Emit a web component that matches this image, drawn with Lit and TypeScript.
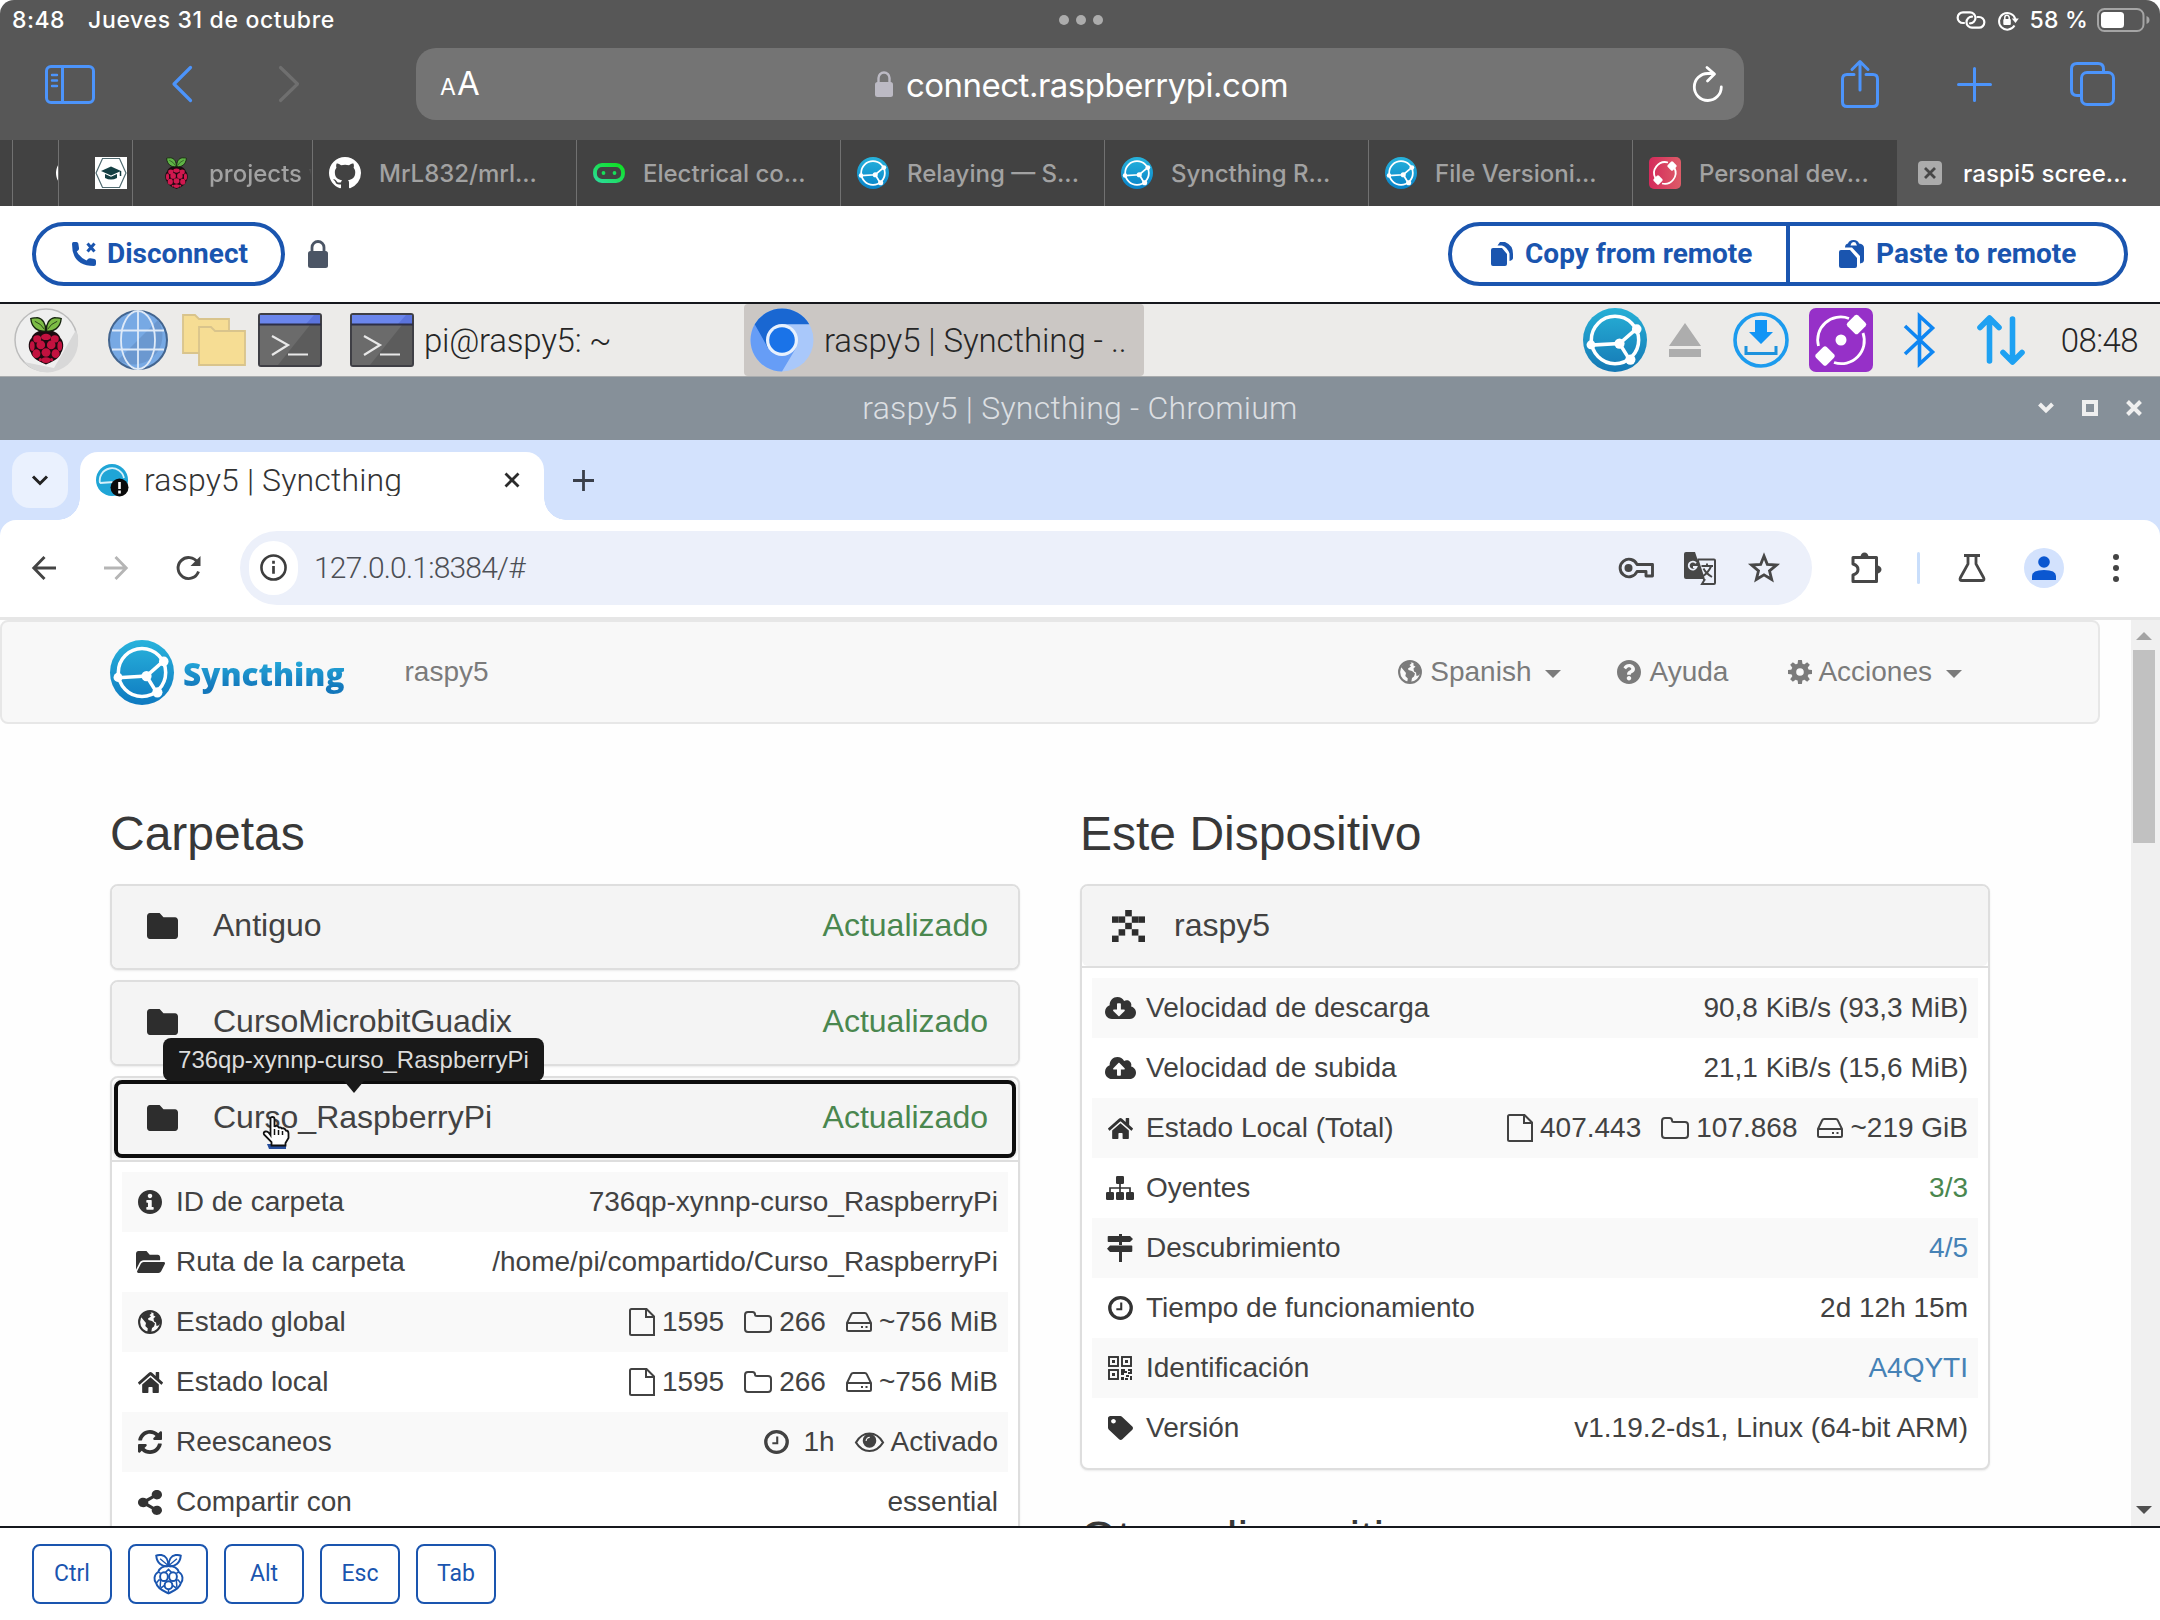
import { LitElement, html, svg, css, nothing, TemplateResult } from "lit";
import { customElement } from "lit/decorators.js";

type Body = TemplateResult | TemplateResult[] | unknown;

const ic = (vb: string, w: number, h: number, body: Body, cls = "") =>
  html`<svg class="ic ${cls}" viewBox=${vb} width=${w} height=${h} preserveAspectRatio="none">${body}</svg>`;

const P = {
  folder: "M464 128H272l-64-64H48C21.49 64 0 85.49 0 112v288c0 26.51 21.49 48 48 48h416c26.51 0 48-21.49 48-48V176c0-26.51-21.49-48-48-48z",
  info: "M256 8C119.043 8 8 119.083 8 256c0 136.997 111.043 248 248 248s248-111.003 248-248C504 119.083 392.957 8 256 8zm0 80c26 0 46 18.804 46 44s-20 44-46 44-46-18.804-46-44 20-44 46-44zm76 314c0 6.627-5.373 12-12 12h-128c-6.627 0-12-5.373-12-12v-30c0-6.627 5.373-12 12-12h22v-90h-22c-6.627 0-12-5.373-12-12v-30c0-6.627 5.373-12 12-12h88c6.627 0 12 5.373 12 12v132h28c6.627 0 12 5.373 12 12v30z",
  folderOpen: "M572.694 292.093L500.27 416.248A63.997 63.997 0 0 1 444.989 448H45.025c-18.523 0-30.064-20.093-20.731-36.093l72.424-124.155A64 64 0 0 1 152 256h399.964c18.523 0 30.064 20.093 20.73 36.093zM152 224h328v-48c0-26.51-21.49-48-48-48H272l-64-64H48C21.49 64 0 85.49 0 112v278.046l69.077-118.418C86.214 242.25 117.989 224 152 224z",
  home: "M280.37 148.26L96 300.11V464a16 16 0 0 0 16 16l112.06-.29a16 16 0 0 0 15.92-16V368a16 16 0 0 1 16-16h64a16 16 0 0 1 16 16v95.64a16 16 0 0 0 16 16.05L464 480a16 16 0 0 0 16-16V300L295.67 148.26a12.19 12.19 0 0 0-15.3 0zM571.6 251.47L488 182.56V44.05a12 12 0 0 0-12-12h-56a12 12 0 0 0-12 12v72.61L318.47 43a48 48 0 0 0-61 0L4.34 251.47a12 12 0 0 0-1.6 16.9l25.5 31A12 12 0 0 0 45.15 301l235.22-193.74a12.19 12.19 0 0 1 15.3 0L530.9 301a12 12 0 0 0 16.9-1.6l25.5-31a12 12 0 0 0-1.7-16.93z",
  share: "M352 320c-22.608 0-43.387 7.819-59.79 20.895l-102.486-64.054a96.551 96.551 0 0 0 0-41.683l102.486-64.054C308.613 184.181 329.392 192 352 192c53.019 0 96-42.981 96-96S405.019 0 352 0s-96 42.981-96 96c0 7.158.79 14.13 2.276 20.841L155.79 180.895C139.387 167.819 118.608 160 96 160c-53.019 0-96 42.981-96 96s42.981 96 96 96c22.608 0 43.387-7.819 59.79-20.895l102.486 64.054A96.301 96.301 0 0 0 256 416c0 53.019 42.981 96 96 96s96-42.981 96-96-42.981-96-96-96z",
  sync: "M370.72 133.28C339.458 104.008 298.888 87.962 255.848 88c-77.458.068-144.328 53.178-162.791 126.85-1.344 5.363-6.122 9.15-11.651 9.15H24.103c-7.498 0-13.194-6.807-11.807-14.176C33.933 94.924 134.813 8 256 8c66.448 0 126.791 26.136 171.315 68.685L463.03 40.97C478.149 25.851 504 36.559 504 57.941V192c0 13.255-10.745 24-24 24H345.941c-21.382 0-32.09-25.851-16.971-40.971l41.75-41.749zM32 296h134.059c21.382 0 32.09 25.851 16.971 40.971l-41.75 41.75c31.262 29.273 71.835 45.319 114.876 45.28 77.418-.07 144.315-53.144 162.787-126.849 1.344-5.363 6.122-9.15 11.651-9.15h57.304c7.498 0 13.194 6.807 11.807 14.176C478.067 417.076 377.187 504 256 504c-66.448 0-126.791-26.136-171.315-68.685L48.97 471.03C33.851 486.149 8 475.441 8 454.059V320c0-13.255 10.745-24 24-24z",
  cloud: "M537.6 226.6c4.1-10.7 6.4-22.4 6.4-34.6 0-53-43-96-96-96-19.7 0-38.1 6-53.3 16.2C367 64.2 315.3 32 256 32c-88.4 0-160 71.6-160 160 0 2.7.1 5.4.2 8.1C40.2 219.8 0 273.2 0 336c0 79.5 64.5 144 144 144h368c70.7 0 128-57.3 128-128 0-61.9-44-113.6-102.4-125.4z",
  cloudDown: "M404.7 315.3L299.3 420.7c-6.2 6.2-16.4 6.2-22.6 0L171.3 315.3c-10.1-10.1-2.9-27.3 11.3-27.3H248V176c0-8.8 7.2-16 16-16h48c8.8 0 16 7.2 16 16v112h65.4c14.2 0 21.4 17.2 11.3 27.3z",
  cloudUp: "M393.4 288H328v112c0 8.8-7.2 16-16 16h-48c-8.8 0-16-7.2-16-16V288h-65.4c-14.3 0-21.4-17.2-11.3-27.3l105.4-105.4c6.2-6.2 16.4-6.2 22.6 0l105.4 105.4c10.1 10.1 2.9 27.3-11.3 27.3z",
  tag: "M0 252.118V48C0 21.49 21.49 0 48 0h204.118a48 48 0 0 1 33.941 14.059l211.882 211.882c18.745 18.745 18.745 49.137 0 67.882L293.823 497.941c-18.745 18.745-49.137 18.745-67.882 0L14.059 286.059A48 48 0 0 1 0 252.118zM112 64c-26.51 0-48 21.49-48 48s21.49 48 48 48 48-21.49 48-48-21.49-48-48-48z",
  question: "M504 256c0 136.997-111.043 248-248 248S8 392.997 8 256C8 119.083 119.043 8 256 8s248 111.083 248 248zM262.655 90c-54.497 0-89.255 22.957-116.549 63.758-3.536 5.286-2.353 12.415 2.715 16.258l34.699 26.31c5.205 3.947 12.621 3.008 16.665-2.122 17.864-22.658 30.113-35.797 57.303-35.797 20.429 0 45.698 13.148 45.698 32.958 0 14.976-12.363 22.667-32.534 33.976C247.128 238.528 216 254.941 216 296v4c0 6.627 5.373 12 12 12h56c6.627 0 12-5.373 12-12v-1.333c0-28.462 83.186-29.647 83.186-106.667 0-58.002-60.165-102-116.531-102zM256 338c-25.365 0-46 20.635-46 46 0 25.364 20.635 46 46 46s46-20.636 46-46c0-25.365-20.635-46-46-46z",
  github: "M8 0C3.58 0 0 3.58 0 8c0 3.54 2.29 6.53 5.47 7.59.4.07.55-.17.55-.38 0-.19-.01-.82-.01-1.49-2.01.37-2.53-.49-2.69-.94-.09-.23-.48-.94-.82-1.13-.28-.15-.68-.52-.01-.53.63-.01 1.08.58 1.23.82.72 1.21 1.87.87 2.33.66.07-.52.28-.87.51-1.07-1.78-.2-3.64-.89-3.64-3.95 0-.87.31-1.59.82-2.15-.08-.2-.36-1.02.08-2.12 0 0 .67-.21 2.2.82.64-.18 1.32-.27 2-.27s1.36.09 2 .27c1.53-1.04 2.2-.82 2.2-.82.44 1.1.16 1.92.08 2.12.51.56.82 1.27.82 2.15 0 3.07-1.87 3.75-3.65 3.95.29.25.54.73.54 1.48 0 1.07-.01 1.93-.01 2.2 0 .21.15.46.55.38A8.01 8.01 0 0 0 16 8c0-4.42-3.58-8-8-8z",
};

/* ---------- table and navbar glyphs ---------- */
const solid = (d: string, vb: string, w: number, h: number) => ic(vb, w, h, svg`<path fill="currentColor" fill-rule="evenodd" d=${d}/>`);
const line = (w: number, h: number, vb: string, body: Body) => ic(vb, w, h, svg`<g fill="none" stroke="currentColor">${body}</g>`);

const G: Record<string, () => TemplateResult> = {
  info: () => solid(P.info, "8 8 496 496", 24, 24),
  folderOpen: () => solid(P.folderOpen, "0 64 576 384", 29, 22),
  home: () => solid(P.home, "0 32 576 448", 25, 21),
  sync: () => solid(P.sync, "8 8 496 496", 24, 24),
  share: () => solid(P.share, "0 0 448 512", 24, 25),
  down: () => solid(P.cloud + P.cloudDown, "0 32 640 448", 31, 22),
  up: () => solid(P.cloud + P.cloudUp, "0 32 640 448", 31, 22),
  tag: () => solid(P.tag, "0 0 512 512", 25, 24),
  question: () => solid(P.question, "8 8 496 496", 24, 24),
  globe: () => ic("0 0 24 24", 24, 24, svg`
    <circle cx="12" cy="12" r="10.9" fill="none" stroke="currentColor" stroke-width="2.1"/>
    <path fill="currentColor" d="M3 7 6.500 2.800 12 1l1.500 2.500-2 1.500 1.500 1.500-3 2 .5 1.500 3.500 1 3 2.500-1 3-2 1.500-.8 4.500h-4l.6-4-2.500-2.500.7-3L5.500 10zM15.500 2l4 2.500 2.500 4 .8 4-2.300 3-2 .5-.5-3.500-2-1-.5-3 2-2-2-1z"/>`),
  clock: () => line(25, 24, "0 0 24 24", svg`<circle cx="12" cy="12" r="10.300" stroke-width="3.200"/><path d="M12.700 6.500v6.700H8" stroke-width="2"/>`),
  sitemap: () => ic("0 0 28 24", 28, 24, svg`
    <g fill="currentColor"><rect x="10" y="0" width="8" height="8" rx="1.300"/><rect x="0" y="16" width="8" height="8" rx="1.300"/><rect x="10" y="16" width="8" height="8" rx="1.300"/><rect x="20" y="16" width="8" height="8" rx="1.300"/></g>
    <path d="M4 16v-4h20v4M14 8v8" fill="none" stroke="currentColor" stroke-width="1.700"/>`),
  signs: () => ic("0 0 26 28", 26, 28, svg`<g fill="currentColor"><path d="M12 0h3v2h-3zM12 8h3v3h-3zM12 18h3v10h-3z"/><path d="M1.500 2h21.500l3 3-3 3H1.500a.8.800 0 0 1-.8-.8V2.800a.8.800 0 0 1 .8-.8zM24.500 11.500H3l-3 3.200 3 3.200h21.500a.8.800 0 0 0 .8-.8v-4.800a.8.800 0 0 0-.8-.8z"/></g>`),
  qr: () => ic("0 0 24 24", 24, 24, svg`<g fill="none" stroke="currentColor" stroke-width="1.900"><rect x="1" y="1" width="9" height="9"/><rect x="14" y="1" width="9" height="9"/><rect x="1" y="14" width="9" height="9"/></g>
    <path fill="currentColor" d="M4 4h3v3H4zM17 4h3v3h-3zM4 17h3v3H4zM13 13h4v2h2v2h-3v2h-3zM20 13h4v5h-4v-2h2v-1h-2zM13 21h3v3h-3zM18 19h3v2h-3zM17 22h3v2h-3zM22 20h2v4h-2z"/>`),
  file: () => line(26, 28, "0 0 26 28", svg`<path d="M1 2.500Q1 1 2.500 1H17.500L25 8.500V27H2.500Q1 27 1 25.500zM17 1V9H25" stroke-width="2"/>`),
  folderO: () => line(28, 22, "0 0 28 22", svg`<path d="M1 4Q1 1 4 1H8.500Q11 1 11 3.500Q11 5 13 5H24Q27 5 27 8V18Q27 21 24 21H4Q1 21 1 18z" stroke-width="2"/>`),
  hdd: () => line(26, 20, "0 0 26 20", svg`<path d="M1 11 5.200 2.300Q5.800 1 7.200 1H18.800Q20.200 1 20.800 2.300L25 11V17.500Q25 19 23.500 19H2.500Q1 19 1 17.500zM1 11H25M15 15h2M19.500 15h2" stroke-width="2"/>`),
  eye: () => ic("0 0 30 20", 29, 20, svg`<path d="M1 10.500C4.500 4.500 9.500 1.500 15 1.500s10.500 3 14 9c-3.500 5.500-8.500 8.500-14 8.500S4.500 16 1 10.500z" fill="none" stroke="currentColor" stroke-width="2.200"/><circle cx="15" cy="8.800" r="7" fill="currentColor"/><path d="M11.500 9a3.700 3.700 0 0 1 3.700-3.700" fill="none" stroke="#f9f9f9" stroke-width="1.200"/>`),
  gear: () => ic("-12 -12 24 24", 24, 24, svg`${[0, 45, 90, 135, 180, 225, 270, 315].map((a) => svg`<path transform="rotate(${a})" d="M-2.600-7 L-1.900-12H1.900L2.600-7z" fill="currentColor"/>`)}<circle r="6.300" fill="none" stroke="currentColor" stroke-width="5"/>`),
};

/* ---------- logos ---------- */
let seq = 0;
const syncthing = (s: number, from = "#27b3dc", to = "#0882c8", h = s) => {
  const id = `sg${seq++}`;
  return ic("0 0 100 100", s, h, svg`
    <defs><linearGradient id=${id} x1="0" y1="0" x2="0" y2="1"><stop offset="0" stop-color=${from}/><stop offset="1" stop-color=${to}/></linearGradient></defs>
    <circle cx="50" cy="50" r="50" fill="url(#${id})"/>
    <circle cx="50" cy="50" r="37" fill="none" stroke="#fff" stroke-width="5.500"/>
    <path d="M12 58 57 55.500 83 33M57 55.500 73 81" fill="none" stroke="#fff" stroke-width="5.500"/>
    <g fill="#fff"><circle cx="12.500" cy="57.500" r="7"/><circle cx="84" cy="33" r="7.500"/><circle cx="74" cy="80.500" r="8"/><circle cx="57" cy="55.500" r="8"/></g>`);
};

const drupes: [number, number, number, number][] = [
  [24, 25.5, 6.2, 4], [13, 28, 5, 4.5], [35, 28, 5, 4.5], [17.5, 35.5, 5.4, 5.4], [30.5, 35.5, 5.4, 5.4],
  [6.8, 37, 3, 6], [41.2, 37, 3, 6], [24, 45, 5.6, 5.2], [12, 46.5, 5, 5.5], [36, 46.5, 5, 5.5], [24, 54.5, 5.5, 3.6], [17, 54, 2, 2], [31, 54, 2, 2],
];
const BODY = "M24 17C32 17 40 20 42 27 46 30 47 40 43 45 41 53 31 57 24 60 17 57 7 53 5 45 1 40 2 30 6 27 8 20 16 17 24 17z";
const LEAF_L = "M23.500 18C14 19.500 6 14 5 2.500 8 1 11 2 13 1.500 20 2.500 24 9 23.500 18z";
const LEAF_R = "M24.500 18C34 19.500 42 14 43 2.500 40 1 37 2 35 1.500 28 2.500 24 9 24.500 18z";
const berry = (red: string, green: string) => svg`
  <path d=${BODY} fill="#1c0a10"/>
  <g fill=${green} stroke="#16240f" stroke-width="1.700"><path d=${LEAF_L}/><path d=${LEAF_R}/></g>
  <path d="M10 6Q18 9 22 16M38 6Q30 9 26 16" fill="none" stroke="#16240f" stroke-width="1"/>
  <g fill=${red}>${drupes.map(([x, y, a, b]) => svg`<ellipse cx=${x} cy=${y} rx=${a} ry=${b}/>`)}</g>`;

const raspberryLine = () => ic("0 0 48 60", 31, 40, svg`
  <g fill="none" stroke="currentColor" stroke-width="3"><path d=${LEAF_L}/><path d=${LEAF_R}/><path d="M11 7 23 17M37 7 25 17" stroke-width="2"/>
  <path d="M24 18C33 18 38 21 40 27 47 31 47 40 43 44 41 53 30 56 24 59 18 56 7 53 5 44 1 40 1 31 8 27 10 21 15 18 24 18z"/>
  <ellipse cx="17" cy="34" rx="6" ry="6.500"/><ellipse cx="31" cy="34" rx="6" ry="6.500"/><circle cx="24" cy="47" r="6"/>
  <path d="M8 27 12 29M40 27 36 29M5 44 9 39 13 39M43 44 39 39 35 39M18 47 12 51M30 47 36 51M24 53v5M12 38 11 50M36 38 37 50M19 28 24 23 29 28" stroke-width="2.300"/></g>`);

const terminal = () => ic("0 0 64 54", 64, 54, svg`
  <rect x="1" y="1" width="62" height="52" rx="2" fill="#5c5c5c" stroke="#3f3f45" stroke-width="2"/>
  <path d="M2 12H52L20 52H2z" fill="#6b6b6b"/><path d="M2 2H62V11H2z" fill="#5b74dd"/><path d="M2 2H56L48 11H2z" fill="#6b86ec"/><path d="M1 11.500H63" stroke="#2d2f47" stroke-width="2"/>
  <path d="M14 23 30 32 14 42M30 41.500H50" fill="none" stroke="#e8e8e8" stroke-width="2.200"/>`);

const purpleConnect = () => ic("0 0 64 64", 64, 64, svg`
  <rect width="64" height="64" rx="7" fill="#9630c8"/>
  <g fill="none" stroke="#fff" stroke-width="2.800"><path d="M40 10.500A23 23 0 0 0 9.500 38M54 25A23 23 0 0 1 25 54.500"/></g>
  <circle cx="32" cy="32" r="5.500" fill="#fff"/>
  <g fill="#fff"><rect x="-7.600" y="-7.600" width="15.200" height="15.200" rx="2.500" transform="translate(47.500 16.500) rotate(45)"/><rect x="-7.600" y="-7.600" width="15.200" height="15.200" rx="2.500" transform="translate(16 48) rotate(45)"/></g>`);

const redConnect = () => ic("0 0 64 64", 32, 32, svg`
  <defs><linearGradient id="rc" x1="0" x2="1" y1="0" y2="0"><stop offset="0" stop-color="#d42a5b"/><stop offset="1" stop-color="#dd5c68"/></linearGradient></defs>
  <rect width="64" height="64" rx="10" fill="url(#rc)"/>
  <g fill="none" stroke="#fff" stroke-width="3.600"><path d="M38 11A22 22 0 0 0 13 43M51 22A22 22 0 0 1 26 53"/></g>
  <g fill="#fff"><rect x="-7.500" y="-7.500" width="15" height="15" rx="3" transform="translate(46 18) rotate(45)"/><rect x="-7.500" y="-7.500" width="15" height="15" rx="3" transform="translate(18 46) rotate(45)"/></g>`);

/* ---------- data ---------- */
interface Stat { icon?: string; text: string }
interface Row { icon: string; label: string; value: Stat[]; tone?: string }

const FOLDER_ROWS: Row[] = [
  { icon: "info", label: "ID de carpeta", value: [{ text: "736qp-xynnp-curso_RaspberryPi" }] },
  { icon: "folderOpen", label: "Ruta de la carpeta", value: [{ text: "/home/pi/compartido/Curso_RaspberryPi" }] },
  { icon: "globe", label: "Estado global", value: [{ icon: "file", text: "1595" }, { icon: "folderO", text: "266" }, { icon: "hdd", text: "~756 MiB" }] },
  { icon: "home", label: "Estado local", value: [{ icon: "file", text: "1595" }, { icon: "folderO", text: "266" }, { icon: "hdd", text: "~756 MiB" }] },
  { icon: "sync", label: "Reescaneos", value: [{ icon: "clock", text: "\u00a01h" }, { icon: "eye", text: "Activado" }] },
  { icon: "share", label: "Compartir con", value: [{ text: "essential" }] },
];
const DEVICE_ROWS: Row[] = [
  { icon: "down", label: "Velocidad de descarga", value: [{ text: "90,8 KiB/s (93,3 MiB)" }] },
  { icon: "up", label: "Velocidad de subida", value: [{ text: "21,1 KiB/s (15,6 MiB)" }] },
  { icon: "home", label: "Estado Local (Total)", value: [{ icon: "file", text: "407.443" }, { icon: "folderO", text: "107.868" }, { icon: "hdd", text: "~219 GiB" }] },
  { icon: "sitemap", label: "Oyentes", value: [{ text: "3/3" }], tone: "ok" },
  { icon: "signs", label: "Descubrimiento", value: [{ text: "4/5" }], tone: "link" },
  { icon: "clock", label: "Tiempo de funcionamiento", value: [{ text: "2d 12h 15m" }] },
  { icon: "qr", label: "Identificación", value: [{ text: "A4QYTI" }], tone: "link" },
  { icon: "tag", label: "Versión", value: [{ text: "v1.19.2-ds1, Linux (64-bit ARM)" }] },
];
const KEYS = ["Ctrl", "", "Alt", "Esc", "Tab"];
const IDENTICON = ["..#..", "##.##", "..#..", ".#.#.", "#...#"];

@customElement("app-root")
export class AppRoot extends LitElement {
  static styles = css`
    :host { display: block; width: 2160px; height: 1620px; overflow: hidden; background: #fff; font-family: "Liberation Sans", Arial, sans-serif; }
    * { box-sizing: border-box; }
    .ic { display: block; flex: none; overflow: visible; }
    .grow { flex: 1; }

    .safari { background: #575757; height: 206px; border-radius: 14px 14px 0 0; font-family: Inter, "Liberation Sans", sans-serif; color: #fff; overflow: hidden; }
    .status { display: grid; grid-template-columns: 1fr auto 1fr; align-items: center; height: 40px; padding: 0 10px 0 12px; font-size: 23px; font-weight: 500; }
    .status-left { display: flex; gap: 23px; white-space: nowrap; }
    .time { letter-spacing: 0.5px; }
    .date { letter-spacing: 0.65px; }
    .status-right { display: flex; align-items: center; justify-content: flex-end; white-space: nowrap; }
    .pct { margin: 0 9px 0 11px; letter-spacing: 0.2px; }
    .rot { margin-left: 12px; }
    .bar { display: flex; align-items: center; height: 100px; padding: 0 42px 12px 45px; color: #4c94fb; }
    .back { margin-left: 77px; }
    .fwd { margin-left: 87px; color: #6f6f6f; }
    .field { display: grid; grid-template-columns: 1fr auto 1fr; align-items: center; flex: none; width: 1328px; height: 72px; margin-left: 117px; padding: 0 21px 0 24px; border-radius: 20px; background: #747474; color: #fff; }
    .aa { display: flex; align-items: baseline; font-size: 33px; line-height: 40px; gap: 1px; padding-top: 2px; }
    .aa-small { font-size: 23px; }
    .host { display: flex; align-items: center; gap: 13px; font-size: 33px; line-height: 40px; letter-spacing: -0.5px; }
    .hostname { padding-top: 1px; }
    .reload { justify-self: end; }
    .share { margin-left: 97px; }
    .plus { margin-left: 78px; }
    .tabs { margin-left: 78px; }
    .tabbar { display: flex; height: 66px; background: #424242; color: #a2a2a2; font-size: 24px; font-weight: 500; }
    .tab { display: flex; align-items: center; flex: none; width: 264px; padding-left: 15px; border-right: 1.5px solid #717171; overflow: hidden; white-space: nowrap; }
    .tab-ic { display: flex; justify-content: center; flex: none; width: 34px; margin-right: 17px; }
    .tab-sliver { width: 13px; padding-left: 0; }
    .tab-edge { width: 46px; padding-left: 43px; color: #fff; }
    .tab-icon { width: 74px; padding-left: 36px; }
    .tab-cut { width: 180px; padding-left: 30px; }
    .tab-cut .tab-ic { width: 26px; margin-right: 20px; }
    .tab-last { border-right: none; }
    .tab-active { background: #575757; color: #fff; border-right: none; padding-left: 21px; letter-spacing: 0.1px; }
    .tab-active .tab-ic { width: 24px; margin-right: 21px; }
    .cut { width: 103px; overflow: hidden; -webkit-mask-image: linear-gradient(90deg, #000 88%, transparent); mask-image: linear-gradient(90deg, #000 88%, transparent); }

    .connect { display: flex; align-items: center; height: 98px; padding: 0 32px; border-bottom: 2px solid #16181d; font-family: Roboto, sans-serif; font-size: 28px; font-weight: 700; color: #1a55af; background: #fff; white-space: nowrap; }
    .pill { display: flex; align-items: center; height: 64px; border: 4px solid #1a55af; border-radius: 32px; }
    .pill span { margin-top: -2px; }
    .disconnect { width: 253px; padding-left: 36px; }
    .disconnect span { margin-left: 11px; }
    .secure { margin-left: 23px; color: #4b5565; }
    .pair { width: 680px; }
    .half { display: flex; align-items: center; height: 100%; }
    .copy { width: 334px; padding-left: 39px; gap: 12px; }
    .paste { flex: 1; border-left: 4px solid #1a55af; padding-left: 49px; gap: 12px; }

    .taskbar { display: flex; align-items: center; height: 72px; padding: 0 22px 0 14px; background: #ecebe9; font-family: Roboto, sans-serif; font-weight: 300; font-size: 33px; color: #262626; white-space: nowrap; letter-spacing: -0.1px; }
    .gl { margin-left: 30px; }
    .fl { margin-left: 14px; }
    .tm { margin-left: 12px; }
    .tm2 { margin-left: 28px; }
    .pi { margin-left: 10px; width: 320px; letter-spacing: -0.25px; }
    .task { display: flex; align-items: center; width: 400px; height: 72px; padding-left: 6px; gap: 10px; background: #cbc7c4; border-radius: 4px; }
    .tray { display: flex; align-items: center; }
    .t-eject { margin-left: 22px; }
    .t-down { margin-left: 32px; }
    .t-purple { margin-left: 20px; }
    .t-bt { margin-left: 31px; }
    .t-net { margin-left: 43px; }
    .clock { margin-left: 36px; letter-spacing: -0.6px; }
    .titlebar { display: grid; grid-template-columns: 1fr auto 1fr; align-items: center; height: 64px; padding: 0 18px 1px; background: #869099; border-top: 1px solid #a9acae; font-family: Roboto, sans-serif; font-weight: 300; font-size: 32px; color: #dcdfe2; white-space: nowrap; letter-spacing: 0.24px; }
    .winbtns { display: flex; justify-content: flex-end; align-items: center; gap: 28px; }
    .strip { display: flex; height: 80px; padding: 12px 12px 0; background: #d3e2fd; font-family: Roboto, sans-serif; font-weight: 300; }
    .chev { display: flex; align-items: center; justify-content: center; width: 56px; height: 56px; border-radius: 18px; background: #eaf1fe; color: #222; }
    .ctab { position: relative; display: flex; width: 464px; height: 68px; margin-left: 12px; padding: 12px 24px 0 16px; background: #fff; border-radius: 18px 18px 0 0; font-size: 32px; color: #333; }
    .ctab::before, .ctab::after { content: ""; position: absolute; bottom: 0; width: 22px; height: 22px; }
    .ctab::before { left: -22px; background: radial-gradient(circle at 0 0, transparent 21.5px, #fff 22px); }
    .ctab::after { right: -22px; background: radial-gradient(circle at 100% 0, transparent 21.5px, #fff 22px); }
    .ctitle { margin-left: 16px; width: 264px; height: 32px; line-height: 33px; letter-spacing: 0.15px; overflow: hidden; white-space: nowrap; }
    .cclose { margin: 8px 0 0 auto; }
    .cplus { margin: 18px 0 0 29px; }
    .toolwrap { background: #d3e2fd; }
    .tool { display: flex; align-items: center; height: 100px; padding: 0 38px 2px 32px; background: #fff; border-radius: 16px 16px 0 0; border-bottom: 3px solid #e6e6e6; color: #444; }
    .t-fwd, .t-rel { margin-left: 48px; }
    .omni { display: flex; align-items: center; flex: none; width: 1572px; height: 74px; margin-left: 39px; padding: 0 33px 0 9px; border-radius: 37px; background: #ecf0fa; font-family: Roboto, sans-serif; font-weight: 300; font-size: 30px; color: #4c4f55; }
    .url { letter-spacing: -0.8px; }
    .site { display: flex; align-items: center; justify-content: center; width: 49px; height: 54px; border-radius: 27px; background: #fff; margin-right: 16px; }
    .o-tr { margin-left: 30px; }
    .o-star { margin-left: 33px; }
    .c-ext { margin-left: 38px; }
    .sep { width: 3px; height: 32px; border-radius: 2px; background: #c9defb; margin: 0 38px 0 35px; }
    .c-user { margin-left: 38px; }
    .c-more { margin-left: 49px; }

    .page { position: relative; display: flex; height: 906px; overflow: hidden; background: #fefefe; color: #424242; font-size: 28px; line-height: 40px; }
    .content { width: 2131px; }
    .navbar { display: flex; align-items: center; width: 2100px; height: 104px; padding: 1px 136px 0 108px; border: 2px solid #e7e7e7; border-radius: 8px; background: #f8f8f8; color: #7b7b7b; white-space: nowrap; }
    .brand { margin-left: 9px; font-family: "Open Sans", "Noto Sans", sans-serif; font-weight: 800; font-size: 31.5px; line-height: 40px; margin-top: 2px; background: linear-gradient(#24a6d8 20%, #1377bb 85%); -webkit-background-clip: text; background-clip: text; color: transparent; }
    .nav { display: flex; align-items: center; margin-top: -2px; }
    .nav span { margin-left: 8px; }
    .me { margin-left: 60px; }
    .n-help { margin-left: 56px; }
    .n-act { margin-left: 60px; }
    .n-act span { margin-left: 6px; }
    .caret { width: 0; height: 0; border: 8px solid transparent; border-top-color: currentColor; border-bottom: 0; margin-left: 14px; margin-top: 4px; }
    .cols { display: flex; gap: 60px; padding: 83px 0 0 110px; }
    .col { width: 910px; }
    h3 { margin: 0 0 24px; font-size: 48px; line-height: 53px; font-weight: 400; color: #383838; white-space: nowrap; }
    .panel { border: 2px solid #dedede; border-radius: 8px; margin-bottom: 10px; background: #fff; box-shadow: 0 1px 2px rgba(0, 0, 0, 0.08); }
    .head { display: flex; align-items: center; height: 82px; padding: 0 30px 4px 35px; background: #f4f4f4; border-radius: 6px; font-size: 32px; color: #424242; }
    .head .ic { color: #2d2d2d; margin-top: 2px; }
    .head-title { margin-left: 35px; }
    .head-dev { height: 80px; padding: 0 30px 2px; }
    .head-dev .head-title { margin-left: 29px; }
    .focus { outline: 4px solid #0d0d0d; outline-offset: -6px; border-radius: 10px; }
    .ok { color: #4a874f; }
    .link { color: #4682b6; }
    .table { border-top: 2px solid #dedede; padding: 10px; }
    .trow { display: flex; align-items: center; height: 60px; padding: 0 10px; white-space: nowrap; }
    .trow:nth-child(odd) { background: #f9f9f9; }
    .tic { display: flex; justify-content: center; width: 36px; margin-right: 8px; color: #333; }
    .vals { display: flex; align-items: center; margin-left: auto; gap: 20px; }
    .stat { display: flex; align-items: center; gap: 7px; }
    h3.devices { margin-top: 42px; }

    .scroll { display: flex; flex-direction: column; align-items: center; width: 29px; padding: 12px 3px 12px 0; background: #f0f0f0; }
    .thumb { width: 22px; height: 193px; margin-top: 10px; background: #c1c1c1; }
    .tri-up { border: 8px solid transparent; border-top: 0; border-bottom-color: #a3a3a3; }
    .tri-dn { margin-top: auto; border: 8px solid transparent; border-bottom: 0; border-top-color: #505050; }

    .tip { position: absolute; left: 163px; top: 418px; width: 381px; height: 43px; border-radius: 8px; background: #191919; color: #dcdcdc; font-size: 24px; line-height: 43px; text-align: center; }
    .tip::after { content: ""; position: absolute; left: 181px; top: 43px; border: 10px solid transparent; border-top: 12px solid #191919; border-bottom: 0; }
    .hand { position: absolute; left: 262px; top: 496px; }

    .keys { display: flex; gap: 16px; height: 94px; padding: 16px 32px 0; border-top: 2px solid #16181d; background: #fff; font-family: Roboto, sans-serif; font-size: 23px; color: #1a55af; }
    .key { display: flex; align-items: center; justify-content: center; width: 80px; height: 60px; border: 2px solid #1a55af; border-radius: 8px; padding-bottom: 1px; }
  `;

  private siteTab(icon: Body, text: string, cls = "") {
    return html`<div class="tab ${cls}"><span class="tab-ic">${icon}</span><span>${text}</span></div>`;
  }

  private safari() {
    return html`
      <div class="safari">
        <div class="status">
          <div class="status-left"><span class="time">8:48</span><span class="date">Jueves 31 de octubre</span></div>
          ${ic("0 0 44 10", 44, 10, svg`<g fill="#acacac"><circle cx="5" cy="5" r="5"/><circle cx="22" cy="5" r="5"/><circle cx="39" cy="5" r="5"/></g>`)}
          <div class="status-right">
            ${ic("0 0 28 18", 28, 18, svg`<g fill="none" stroke="#fff" stroke-width="2.200" stroke-linecap="round"><path d="M7 12H6A5 5 0 0 1 6 1.300H13A5.300 5.300 0 0 1 13 12.300"/><path d="M20.500 6H22A5 5 0 0 1 22 16.700H15A5.300 5.300 0 0 1 15 5.700"/></g>`)}
            ${ic("0 0 22 20", 22, 20, svg`<path d="M17.500 15.500A8.300 8.300 0 1 1 18.300 9" fill="none" stroke="#fff" stroke-width="2"/><path d="M14.800 8.500h7L18.500 13z" fill="#fff"/><rect x="6.300" y="9" width="7.500" height="6" rx="1" fill="#fff"/><path d="M7.800 9V7.500a2.200 2.200 0 0 1 4.400 0V9" fill="none" stroke="#fff" stroke-width="1.500"/>`, "rot")}
            <span class="pct">58 %</span>
            ${ic("0 0 53 24", 53, 24, svg`<rect x="1" y="1" width="45.500" height="22" rx="6.500" fill="none" stroke="#a5a5a5" stroke-width="2"/><rect x="4" y="4" width="23" height="16" rx="3.500" fill="#fff"/><path d="M49.500 8q3 1.200 3 4t-3 4z" fill="#a5a5a5"/>`)}
          </div>
        </div>
        <div class="bar">
          ${ic("0 0 50 39", 50, 39, svg`<g fill="none" stroke="currentColor" stroke-width="3" stroke-linecap="round"><rect x="1.500" y="1.500" width="47" height="36" rx="4.500"/><path d="M17.500 2v35"/><path d="M7 10h5M7 15.500h5M7 21h5" stroke-width="2.400"/></g>`)}
          ${ic("0 0 20 36", 20, 36, svg`<path d="M18.500 1.500 2 18 18.500 34.500" fill="none" stroke="currentColor" stroke-width="3.200" stroke-linecap="round" stroke-linejoin="round"/>`, "back")}
          ${ic("0 0 20 36", 20, 36, svg`<path d="M1.500 1.500 18.500 18 1.500 34.500" fill="none" stroke="currentColor" stroke-width="3.200" stroke-linecap="round" stroke-linejoin="round"/>`, "fwd")}
          <div class="field">
            <div class="aa"><span class="aa-small">A</span><span>A</span></div>
            <div class="host">
              ${ic("0 0 18 26", 18, 26, svg`<rect y="11" width="18" height="15" rx="2.500" fill="#bcbac4"/><path d="M3.500 12V7a5.500 5.500 0 0 1 11 0V12" fill="none" stroke="#bcbac4" stroke-width="2.400"/>`)}
              <span class="hostname">connect.raspberrypi.com</span>
            </div>
            ${ic("0 0 30 36", 30, 36, svg`<g fill="none" stroke="#fff" stroke-width="2.800" stroke-linecap="round" stroke-linejoin="round"><path d="M28.300 21A13.500 13.500 0 1 1 15 7.500H20"/><path d="M14 1.500 21.500 8 14.500 15"/></g>`, "reload")}
          </div>
          ${ic("0 0 38 48", 38, 48, svg`<g fill="none" stroke="currentColor" stroke-width="3" stroke-linecap="round" stroke-linejoin="round"><path d="M13 14.500H6Q1.500 14.500 1.500 19V42Q1.500 46.500 6 46.500H32Q36.500 46.500 36.500 42V19Q36.500 14.500 32 14.500H25M19 30V2M11 9.500 19 1.500 27 9.500"/></g>`, "share")}
          ${ic("0 0 35 35", 35, 35, svg`<path d="M17.500 1.500v32M1.500 17.500h32" stroke="currentColor" stroke-width="3" stroke-linecap="round"/>`, "plus")}
          ${ic("0 0 45 44", 45, 44, svg`<g fill="none" stroke="currentColor" stroke-width="3"><path d="M11 33.500H7Q1.500 33.500 1.500 28V7Q1.500 1.500 7 1.500H28Q33.500 1.500 33.500 7V10"/><rect x="11.500" y="10.500" width="32" height="32" rx="5.500"/></g>`, "tabs")}
        </div>
        <div class="tabbar">
          <div class="tab tab-sliver"></div>
          <div class="tab tab-edge">${solid(P.github, "0 0 16 16", 32, 32)}</div>
          <div class="tab tab-icon">${ic("0 0 32 32", 32, 32, svg`<rect width="32" height="32" fill="#fff"/><path d="M7.500 1.500H24.500L31 16 24.500 30.500H7.500L1 16z" fill="none" stroke="#4f6a70" stroke-width="1.200"/><path d="M16 9.500 26 14 16 18.500 6 14z" fill="#143f43"/><path d="M10 17v4q6 3 12 0v-4l-6 2.800z" fill="#143f43"/><path d="M25.500 14v5" stroke="#143f43" stroke-width="1.500"/>`)}</div>
          <div class="tab tab-cut"><span class="tab-ic">${ic("0 0 48 60", 25, 32, berry("#d0184f", "#5fb446"))}</span><span class="cut">projects w</span></div>
          ${this.siteTab(ic("0 0 16 16", 32, 32, svg`<path fill="#fff" d=${P.github}/>`), "MrL832/mrl...")}
          ${this.siteTab(ic("0 0 32 20", 32, 20, svg`<defs><linearGradient id="mb" x1="0" y1="1" x2="1" y2="0"><stop offset="0" stop-color="#2bdc9a"/><stop offset="1" stop-color="#0fe020"/></linearGradient></defs><rect x="2" y="2" width="28" height="16" rx="7" fill="none" stroke="url(#mb)" stroke-width="3.800"/><circle cx="10.500" cy="10" r="1.900" fill="#17df5a"/><circle cx="21.500" cy="10" r="1.900" fill="#17df5a"/>`), "Electrical co...")}
          ${this.siteTab(syncthing(32), "Relaying — S...")}
          ${this.siteTab(syncthing(32), "Syncthing R...")}
          ${this.siteTab(syncthing(32), "File Versioni...")}
          ${this.siteTab(redConnect(), "Personal dev...", "tab-last")}
          ${this.siteTab(ic("0 0 24 24", 24, 24, svg`<rect width="24" height="24" rx="4" fill="#ababab"/><path d="M7 7 17 17M17 7 7 17" stroke="#474747" stroke-width="2.800"/>`), "raspi5 scree...", "tab-active")}
        </div>
      </div>`;
  }

  private connectBar() {
    return html`
      <div class="connect">
        <div class="pill disconnect">
          ${ic("0 0 24 24", 24, 24, svg`<path fill="currentColor" d="M1.500 0H4.500Q6 0 6.300 1.500L7 6Q7.200 7.500 6 8.500L4.800 9.500Q7.500 15 14.500 18.500L16 17Q17 16 18.500 16.300L22.500 17Q24 17.300 24 19V22Q24 24 22 24Q0 24 0 2Q0 0 1.500 0z"/><path d="M15.500 1.500 22.500 9.500M22.500 1.500 15.500 9.500" stroke="currentColor" stroke-width="3"/>`)}
          <span>Disconnect</span>
        </div>
        ${ic("0 0 20 28", 20, 28, svg`<rect y="11" width="20" height="17" rx="2.500" fill="currentColor"/><path d="M4 12V7.500a6 6 0 0 1 12 0V12" fill="none" stroke="currentColor" stroke-width="2.800"/>`, "secure")}
        <div class="grow"></div>
        <div class="pill pair">
          <div class="half copy">
            ${ic("0 0 22 24", 22, 24, svg`<path fill="currentColor" d="M2 6H11L16 12V22Q16 24 14 24H2Q0 24 0 22V8Q0 6 2 6zM6.500 3.500 9 0H14Q22 3 22 12V16Q22 18 18.500 19V11.500Q16 5 11 3.500z"/>`)}
            <span>Copy from remote</span>
          </div>
          <div class="half paste">
            ${ic("0 0 25 28", 25, 28, svg`<path fill="currentColor" fill-rule="evenodd" d="M2 10H11L18 18V26Q18 28 16 28H2Q0 28 0 26V12Q0 10 2 10zM6 7.500Q6 4 9 3.500 10 0 14.500 0T20 3.500Q25 4 25 8V20Q25 23 21 23.500V16L13 7.500zM11.500 5.500H18L16.500 2.500Q14.500 1.500 12.500 3z"/>`)}
            <span>Paste to remote</span>
          </div>
        </div>
      </div>`;
  }

  private desktop() {
    return html`
      <div class="taskbar">
        ${ic("0 0 64 64", 64, 64, svg`<circle cx="32" cy="32" r="31" fill="#efefef" stroke="#bcbcbc" stroke-width="1.500"/><path d="M10 54A31 31 0 0 0 62 22L40 60z" fill="#d8d8d8"/><g transform="translate(12.800 8.500) scale(.8)">${berry("#c3113f", "#7cbc45")}</g>`)}
        ${ic("0 0 60 60", 60, 60, svg`<circle cx="30" cy="30" r="29" fill="#77a9e4" stroke="#43658f" stroke-width="2"/><path d="M50 10A29 29 0 0 1 10 50z" fill="#6b98d0"/><g fill="none" stroke="#dfeaf8" stroke-width="1.800"><path d="M30 1v58M4 20.500H56M4 39.500H56"/><ellipse cx="30" cy="30" rx="17" ry="29"/></g>`, "gl")}
        ${ic("0 0 64 52", 64, 52, svg`<g fill="#f6dd94" stroke="#d9c48c" stroke-width="1.800"><path d="M1 1H13L17 5H47V39H1z"/><path d="M17 13H29L33 17H63V51H17z"/></g>`, "fl")}
        <span class="tm">${terminal()}</span><span class="tm2">${terminal()}</span>
        <span class="pi">pi@raspy5: ~</span>
        <div class="task">
          ${ic("0 0 64 64", 64, 64, svg`<circle cx="32" cy="32" r="31.500" fill="#a9c8fa"/><path d="M32 32 4.700 16.300A31.500 31.500 0 0 0 32 63.500L46 40z" fill="#669df6"/><path d="M4.700 16.300A31.500 31.500 0 0 1 59.300 16.300H32L18 40z" fill="#1967d2"/><circle cx="32" cy="32" r="16" fill="#e8f1fd"/><circle cx="32" cy="32" r="12.800" fill="#1a73e8"/>`)}
          <span>raspy5 | Syncthing - ..</span>
        </div>
        <div class="grow"></div>
        <div class="tray">
          ${syncthing(64, "#27b0d6", "#1578b5")}
          ${ic("0 0 32 34", 32, 34, svg`<path d="M16 0 32 23H0z M0 26H32V34H0z" fill="#adadad"/>`, "t-eject")}
          ${ic("0 0 56 56", 56, 56, svg`<circle cx="28" cy="28" r="26" fill="none" stroke="#1c9bee" stroke-width="3.600"/><path d="M22 8H34V20H40L28 32 16 20H22z" fill="#1295f5"/><path d="M13 34V41.500H43V34" fill="none" stroke="#1d92dd" stroke-width="3"/>`, "t-down")}
          <span class="t-purple">${purpleConnect()}</span>
          ${ic("0 0 30 56", 30, 56, svg`<path d="M1 14 28.500 40 15.500 52V4L28.500 16 1 42" fill="none" stroke="#0f86f2" stroke-width="3.600"/>`, "t-bt")}
          ${ic("0 0 48 50", 48, 50, svg`<g fill="none" stroke="#1ea1f2" stroke-width="5.600" stroke-linecap="round" stroke-linejoin="round"><path d="M12.500 46V4M3 12.500 12.500 3 22 12.500M35.500 4V46M26 37.500 35.500 47 45 37.500"/></g>`, "t-net")}
        </div>
        <span class="clock">08:48</span>
      </div>
      <div class="titlebar">
        <span></span><span>raspy5 | Syncthing - Chromium</span>
        <div class="winbtns">
          ${ic("0 0 16 10", 16, 10, svg`<path d="M1.500 1 8 7.500 14.500 1" fill="none" stroke="#efefef" stroke-width="4"/>`)}
          ${ic("0 0 16 16", 16, 16, svg`<rect x="2" y="2" width="12" height="12" fill="none" stroke="#efefef" stroke-width="4"/>`)}
          ${ic("0 0 16 16", 16, 16, svg`<path d="M1.500 1.500 14.500 14.500M14.500 1.500 1.500 14.500" stroke="#efefef" stroke-width="4"/>`)}
        </div>
      </div>
      <div class="strip">
        <div class="chev">${ic("0 0 16 10", 16, 10, svg`<path d="M1 1.500 8 8.500 15 1.500" fill="none" stroke="#222" stroke-width="3"/>`)}</div>
        <div class="ctab">
          ${ic("0 0 32 32", 32, 32, svg`<circle cx="16" cy="16" r="16" fill="#1fa5d6"/><path d="M4 19A12 12 0 1 1 28 14M4 19 18 18" fill="none" stroke="#d6f0fa" stroke-width="1.800"/><circle cx="23.500" cy="23.500" r="9" fill="#0a0a0a"/><path d="M23.500 18v7M23.500 26.500v3" stroke="#fff" stroke-width="2.600"/>`)}
          <span class="ctitle">raspy5 | Syncthing</span>
          ${ic("0 0 16 16", 16, 16, svg`<path d="M1.500 1.500 14.500 14.500M14.500 1.500 1.500 14.500" stroke="#2b2b2b" stroke-width="2.800"/>`, "cclose")}
        </div>
        ${ic("0 0 21 21", 21, 21, svg`<path d="M10.500 0v21M0 10.500h21" stroke="#3a3f4a" stroke-width="2.800"/>`, "cplus")}
      </div>
      <div class="toolwrap"><div class="tool">
        ${ic("0 0 24 24", 24, 24, svg`<path d="M24 12H2M12.500 1 1.800 12 12.500 23" fill="none" stroke="#444" stroke-width="2.900"/>`)}
        ${ic("0 0 24 24", 24, 24, svg`<path d="M0 12H22M11.500 1 22.200 12 11.500 23" fill="none" stroke="#b5b5b5" stroke-width="2.900"/>`, "t-fwd")}
        ${ic("0 0 25 24", 25, 24, svg`<path d="M22.500 15.500A10.500 10.500 0 1 1 21.500 6.500" fill="none" stroke="#444" stroke-width="2.900"/><path d="M24.500 0V10H14.500z" fill="#444"/>`, "t-rel")}
        <div class="omni">
          <div class="site">${ic("0 0 28 28", 27, 27, svg`<circle cx="14" cy="14" r="12.500" fill="none" stroke="#3d3d3d" stroke-width="2.700"/><path d="M14 12.500v8M14 7v3.200" stroke="#3d3d3d" stroke-width="2.800"/>`)}</div>
          <span class="url">127.0.0.1:8384/#</span>
          <div class="grow"></div>
          ${ic("0 0 36 20", 36, 20, svg`<path d="M19 6.500H34.500V18H28V13.500H19A8.800 8.800 0 1 1 19 6.500z" fill="none" stroke="#474747" stroke-width="2.900" stroke-linejoin="round"/><circle cx="10.500" cy="10" r="4" fill="#474747"/>`)}
          ${ic("0 0 32 34", 32, 34, svg`<path d="M2 1H11L20 28H2Q0 28 0 26V3Q0 1 2 1z" fill="#474747"/><path d="M13.500 8.500H30Q31 8.500 31 9.500V32Q31 33 30 33H18L21 28M13.500 8.500 20.500 30" fill="none" stroke="#474747" stroke-width="2"/><path d="M12 12.300A4 4 0 1 0 12.500 16H9" fill="none" stroke="#ecf0fa" stroke-width="1.900"/><path d="M17.500 15H29M23 12.500V15M27 15.500Q24 22 18.500 25.500M19.500 17.500Q22 22.500 28 26" fill="none" stroke="#474747" stroke-width="1.900"/>`, "o-tr")}
          ${ic("0 0 30 29", 30, 29, svg`<path d="M15 3 18.300 11.300 27.500 12 20.500 17.800 22.700 26.500 15 21.800 7.300 26.500 9.500 17.800 2.500 12 11.700 11.300z" fill="none" stroke="#474747" stroke-width="2.800"/>`, "o-star")}
        </div>
        ${ic("0 0 32 32", 32, 32, svg`<path d="M3 5.500H26.500V29.500H3V23Q8 21.500 8 17.500T3 12z" fill="none" stroke="#474747" stroke-width="3" stroke-linejoin="round"/><path d="M10.500 5A4 4.500 0 0 1 18.500 5zM27 13.500A4.500 4 0 0 1 27 21.500z" fill="#474747"/>`, "c-ext")}
        <span class="sep"></span>
        ${ic("0 0 28 28", 28, 28, svg`<path d="M6 1.500H22M10 2V10L2.500 23.500Q1 26.500 4 26.500H24Q27 26.500 25.500 23.500L18 10V2" fill="none" stroke="#474747" stroke-width="2.800"/>`)}
        ${ic("0 0 40 40", 40, 40, svg`<circle cx="20" cy="20" r="20" fill="#d3e2fd"/><circle cx="20" cy="14" r="5.800" fill="#0b57d0"/><path d="M8 32V28Q8 22 20 22T32 28V32z" fill="#0b57d0"/>`, "c-user")}
        ${ic("0 0 6 28", 6, 28, svg`<g fill="#444"><circle cx="3" cy="3" r="3"/><circle cx="3" cy="14" r="3"/><circle cx="3" cy="25" r="3"/></g>`, "c-more")}
      </div></div>`;
  }

  private rows(rows: Row[]) {
    return html`<div class="table">
      ${rows.map((r) => html`<div class="trow">
        <span class="tic">${G[r.icon]()}</span><span>${r.label}</span>
        <div class="vals ${r.tone ?? ""}">${r.value.map((v) => html`<span class="stat">${v.icon ? G[v.icon]() : nothing}<span>${v.text}</span></span>`)}</div>
      </div>`)}
    </div>`;
  }

  private folderHead(name: string, cls = "") {
    return html`<div class="head ${cls}">${solid(P.folder, "0 64 512 384", 31, 26)}<span class="head-title">${name}</span><div class="grow"></div><span class="ok">Actualizado</span></div>`;
  }

  private page() {
    return html`
      <div class="page">
        <div class="content">
          <div class="navbar">
            ${syncthing(64, "#29b3dc", "#0e79c0", 65)}
            <span class="brand">Syncthing</span>
            <span class="nav me">raspy5</span>
            <div class="grow"></div>
            <div class="nav">${G.globe()}<span>Spanish</span><i class="caret"></i></div>
            <div class="nav n-help">${G.question()}<span>Ayuda</span></div>
            <div class="nav n-act">${G.gear()}<span>Acciones</span><i class="caret"></i></div>
          </div>
          <div class="cols">
            <div class="col">
              <h3>Carpetas</h3>
              <div class="panel">${this.folderHead("Antiguo")}</div>
              <div class="panel">${this.folderHead("CursoMicrobitGuadix")}</div>
              <div class="panel">${this.folderHead("Curso_RaspberryPi", "focus")}${this.rows(FOLDER_ROWS)}</div>
            </div>
            <div class="col">
              <h3>Este Dispositivo</h3>
              <div class="panel">
                <div class="head head-dev">
                  ${ic("0 0 5 5", 33, 32, svg`${IDENTICON.flatMap((r, y) => [...r].map((c, x) => c === "#" ? svg`<rect x=${x} y=${y} width="1" height="1" fill="#2d2d2d"/>` : svg``))}`)}
                  <span class="head-title">raspy5</span>
                </div>
                ${this.rows(DEVICE_ROWS)}
              </div>
              <h3 class="devices">Otros dispositivos</h3>
            </div>
          </div>
        </div>
        <div class="scroll"><i class="tri-up"></i><div class="thumb"></div><i class="tri-dn"></i></div>
        <div class="tip">736qp-xynnp-curso_RaspberryPi</div>
        <div class="hand">${ic("0 0 28 34", 28, 34, svg`<path d="M5 28H24V33H7z" fill="#274e9c"/><path d="M8.500 2.500Q8.500 1 10.500 1T12.500 3V11Q13 9.500 15 10T16.500 12Q18 10.500 20 12.500 22.500 11.500 24 14.500 26.500 14.500 26.500 17.500V22L23.500 27V29.500H9.500V26L2 18.500Q1 16 3.500 15.500T8.500 19z" fill="#fff" stroke="#111" stroke-width="1.800"/><path d="M12.500 13v6M16.500 14v5M20.500 15v4" stroke="#111" stroke-width="1.500"/>`)}</div>
      </div>`;
  }

  render() {
    seq = 0;
    return html`
      ${this.safari()}${this.connectBar()}${this.desktop()}${this.page()}
      <div class="keys">${KEYS.map((k) => html`<div class="key">${k || raspberryLine()}</div>`)}</div>`;
  }
}
